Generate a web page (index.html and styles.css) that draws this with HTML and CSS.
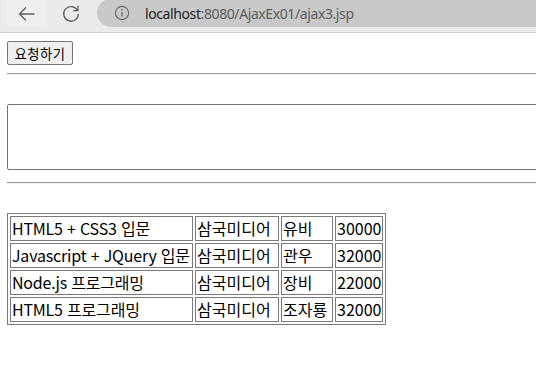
FILE: index.html
```html
<!DOCTYPE html>
<html lang="ko">
<head>
    <meta charset="UTF-8">
    <meta name="viewport" content="width=device-width, initial-scale=1.0">
    <title>ajax3</title>
    <link rel="stylesheet" href="styles.css">
</head>
<body>
    <!-- 브라우저 상단 바 -->
    <div class="toolbar">
        <div class="nav-btn back">
            <svg width="20" height="20" viewBox="0 0 20 20">
                <path d="M2.5 10 H17.5 M9 3.5 L2.5 10 L9 16.5" fill="none" stroke="#606060" stroke-width="1.3"/>
            </svg>
        </div>
        <div class="nav-btn reload">
            <svg width="20" height="20" viewBox="0 0 20 20">
                <path d="M16.3 6.2 A7.3 7.3 0 1 0 17.3 10" fill="none" stroke="#606060" stroke-width="1.3"/>
                <path d="M17 1.8 V6.6 H12.2" fill="none" stroke="#606060" stroke-width="1.3"/>
            </svg>
        </div>
        <div class="address">
            <svg class="info" width="16" height="16" viewBox="0 0 16 16">
                <circle cx="8" cy="8" r="6.6" fill="none" stroke="#666" stroke-width="1.1"/>
                <path d="M8 7 V11.5" stroke="#666" stroke-width="1.2"/>
                <circle cx="8" cy="4.9" r="0.8" fill="#666"/>
            </svg>
            <span class="host">localhost</span><span class="path">:8080/AjaxEx01/ajax3.jsp</span>
        </div>
    </div>

    <div class="page">
        <button class="req-btn" onclick="loadBooks()">요청하기</button>
        <hr>
        <textarea class="result" id="result"></textarea>
        <hr>
        <table class="books" id="books">
            <tr><td class="c-title">HTML5 + CSS3 입문</td><td class="c-pub">삼국미디어</td><td class="c-author">유비</td><td class="c-price">30000</td></tr>
            <tr><td class="c-title">Javascript + JQuery 입문</td><td class="c-pub">삼국미디어</td><td class="c-author">관우</td><td class="c-price">32000</td></tr>
            <tr><td class="c-title">Node.js 프로그래밍</td><td class="c-pub">삼국미디어</td><td class="c-author">장비</td><td class="c-price">22000</td></tr>
            <tr><td class="c-title">HTML5 프로그래밍</td><td class="c-pub">삼국미디어</td><td class="c-author">조자룡</td><td class="c-price">32000</td></tr>
        </table>
    </div>

    <script>
        // 서버가 없으니 그냥 비워둠
        function loadBooks() {
            document.getElementById('result').value = '';
        }
    </script>
</body>
</html>
```

FILE: styles.css
```css
body {
    margin: 0;
    overflow: hidden;
    font-family: "Noto Sans CJK KR", "Noto Sans", sans-serif;
    background: #fff;
}

/* 상단 바 */
.toolbar {
    display: flex;
    align-items: flex-start;
    height: 32px;
    background: #ebebeb;
    border-bottom: 1px solid #cfcfcf;
}

.nav-btn {
    display: flex;
    align-items: center;
    justify-content: center;
    height: 27px;
}

.nav-btn.back {
    width: 39px;
    margin-left: 7px;
    background: #efefef;
}

.nav-btn.reload {
    width: 39px;
    margin-left: 5px;
}

.address {
    flex: 1;
    display: flex;
    align-items: center;
    height: 28px;
    margin-top: -1px;
    margin-left: 7px;
    padding-left: 17px;
    background: #c9c9c9;
    border-radius: 14px 0 0 14px;
    font-family: "Noto Sans", sans-serif;
    font-size: 14px;
    letter-spacing: -0.4px;
}

.info {
    margin-right: 15px;
}

.host {
    color: #1e1e1e;
}

.path {
    color: #5c5c5c;
}

/* 본문 */
.page {
    padding: 8px 0 8px 7px;
}

.req-btn {
    display: block;
    width: 66px;
    height: 24px;
    padding: 0;
    font-family: "Noto Sans CJK KR", sans-serif;
    font-size: 13.3px;
    letter-spacing: 0.5px;
    color: #000;
    background: #efefef;
    border: 1px solid #767676;
    border-radius: 2px;
}

hr {
    margin: 8px 0;
    border: none;
    border-top: 1px solid #9a9a9a;
    border-bottom: 1px solid #eeeeee;
}

.result {
    display: block;
    width: 620px;
    height: 66px;
    box-sizing: border-box;
    margin: 29px 0 12px;
    border: 1px solid #767676;
    border-radius: 2px;
    resize: none;
}

.books {
    width: 379px;
    margin-top: 29px;
    table-layout: fixed;
    border: 1px solid #7a7a7a;
    border-spacing: 2px;
    font-size: 16px;
}

.books td {
    padding: 1px;
    height: 21px;
    line-height: 21px;
    border: 1px solid #7a7a7a;
    white-space: nowrap;
    overflow: hidden;
}

.c-title { width: 179px; letter-spacing: -0.2px; }
.c-pub { width: 80px; }
.c-author { width: 48px; }
.c-price { width: 44px; }
```
